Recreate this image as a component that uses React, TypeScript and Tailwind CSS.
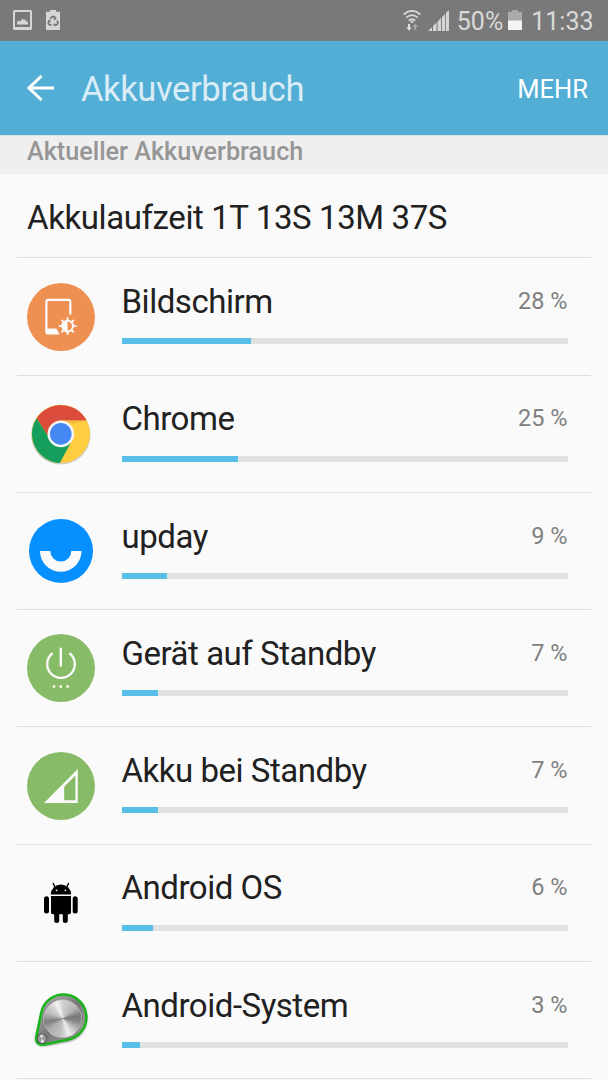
import type { ReactNode } from "react";

interface UsageEntry {
    name: string;
    percent: number;
    icon: ReactNode;
}

function ScreenIcon() {
    return (
        <svg viewBox="0 1.5 90 90" className="w-[90px] h-[90px]">
            <circle cx="45" cy="46.5" r="34" fill="#ee9052" />
            <path d="M54.3 44V31Q54.3 29.4 52.7 29.4H32Q30.4 29.4 30.4 31V61" fill="none" stroke="#fafafa" strokeWidth="2.2" />
            <path d="M29.3 58H40.5L43.5 64H31.5Q29.3 64 29.3 62Z" fill="#fafafa" />
            <g stroke="#fafafa" strokeWidth="1.9" strokeLinecap="round">
                <path d="M51.6 47.6V49.5M51.6 62V63.6M43.4 55.6H45.3M58 55.6H59.8M45.9 49.9L47.2 51.2M56 60L57.3 61.3M57.3 49.9L56 51.2M47.2 60L45.9 61.3" />
                <circle cx="51.6" cy="55.6" r="5.4" fill="none" />
            </g>
            <path d="M51.6 50.2A5.4 5.4 0 0 0 51.6 61Z" fill="#fafafa" />
        </svg>
    );
}

function ChromeIcon() {
    return (
        <svg viewBox="0 -1.3 90 90" className="w-[90px] h-[90px]">
            <circle cx="44.8" cy="44.6" r="29.7" fill="#000" opacity="0.18" />
            <circle cx="44.8" cy="43.6" r="29.2" fill="#ffcd40" />
            <path d="M20.6 27.9A29.2 29.2 0 0 1 70.7 30.2H44.8L31.5 45Z" fill="#db4c3c" />
            <path d="M20.6 27.9A29.2 29.2 0 0 0 43.8 72.8L54.5 53L44.8 43.6L31.5 45Z" fill="#169f5c" />
            <path d="M44.8 30.2H70.7L57 33.5Z" fill="#e9b33a" opacity="0.7" />
            <circle cx="44.8" cy="43.6" r="13.3" fill="#f6f6f6" />
            <circle cx="44.8" cy="43.6" r="10.8" fill="#4587f3" />
        </svg>
    );
}

function UpdayIcon() {
    return (
        <svg viewBox="0 0 90 90" className="w-[90px] h-[90px]">
            <circle cx="45" cy="45" r="32" fill="#0690ff" />
            <path d="M24 45H34.3A10.5 10.5 0 0 0 55.3 45H65.5A20.7 20.7 0 0 1 24 45Z" fill="#fafafa" />
        </svg>
    );
}

function PowerIcon() {
    return (
        <svg viewBox="0 -0.8 90 90" className="w-[90px] h-[90px]">
            <circle cx="45" cy="44.2" r="34" fill="#88bb68" />
            <path d="M36.5 29.5A13.8 13.8 0 1 0 53.5 29.5M44.8 24V42.8" fill="none" stroke="#fafafa" strokeWidth="2.4" />
            <path d="M36.8 62.7H39.2M43.6 62.7H46M50.4 62.7H52.8" stroke="#fafafa" strokeWidth="2.3" />
        </svg>
    );
}

function SignalIcon() {
    return (
        <svg viewBox="0 0.5 90 90" className="w-[90px] h-[90px]">
            <circle cx="45" cy="45.5" r="34" fill="#88bb68" />
            <path fillRule="evenodd" d="M28 62.5L61.8 28.5V62.5ZM48.2 46.2V59.7H59.4V35Z" fill="#fafafa" />
        </svg>
    );
}

function AndroidIcon() {
    return (
        <svg viewBox="0 -0.3 90 90" className="w-[90px] h-[90px]">
            <path d="M34.7 36.2A10.2 10 0 0 1 55.2 36.2Z" />
            <path d="M38.8 28.5L37.3 25.2M51 28.5L52.5 25.2" stroke="#000" strokeWidth="1.4" strokeLinecap="round" />
            <path d="M35 37.8H55V54.3Q55 56 53.3 56H51.8V62.3A2.3 2.3 0 0 1 46.8 62.3V56H43.2V62.3A2.3 2.3 0 0 1 38.2 62.3V56H36.7Q35 56 35 54.3Z" />
            <rect x="28" y="38" width="5" height="17.2" rx="2.5" />
            <rect x="56.7" y="38" width="5" height="17.2" rx="2.5" />
            <circle cx="40.6" cy="32" r="0.9" fill="#fafafa" />
            <circle cx="49.4" cy="32" r="0.9" fill="#fafafa" />
        </svg>
    );
}

function AndroidSystemIcon() {
    return (
        <svg viewBox="0 0 90 90" className="w-[90px] h-[90px]">
            <defs>
                <linearGradient id="plate" x1="0" y1="0" x2="1" y2="1">
                    <stop offset="0" stopColor="#c4c4c4" />
                    <stop offset="0.5" stopColor="#777" />
                    <stop offset="1" stopColor="#b5b5b5" />
                </linearGradient>
                <filter id="soft" x="-20%" y="-20%" width="140%" height="140%">
                    <feGaussianBlur stdDeviation="1.3" />
                </filter>
                <clipPath id="dial">
                    <circle cx="46.5" cy="43.7" r="19" />
                </clipPath>
            </defs>
            <path d="M25.3 37.5A23.2 23.2 0 1 1 52.5 66.5L29 71Q19 71.5 19.3 63Z" fill="#000" opacity="0.5" filter="url(#soft)" />
            <path d="M25.3 37.5A22.8 22.8 0 1 1 52.5 64.5L27.5 69.7Q19.6 70.3 20.2 62.5Z" fill="url(#plate)" stroke="#18b51a" strokeWidth="2.5" />
            <circle cx="46.5" cy="43.7" r="20" fill="#616161" />
            <g clipPath="url(#dial)">
                <foreignObject x="26" y="23" width="42" height="42">
                    <div className="w-[42px] h-[42px] bg-[conic-gradient(from_0deg_at_50%_49%,#d0d0d0,#b5b5b5_50deg,#777_80deg,#858585_100deg,#bbb_130deg,#eee_158deg,#c0c0c0_190deg,#b0b0b0_230deg,#7d7d7d_260deg,#999_272deg,#bbb_290deg,#d0d0d0_315deg,#f4f4f4_338deg,#d0d0d0)]" />
                </foreignObject>
            </g>
            <circle cx="46.5" cy="43.7" r="19.2" fill="none" stroke="#c0c0c0" strokeWidth="0.8" />
            <circle cx="26" cy="63.7" r="5.2" fill="#555" />
            <circle cx="26" cy="63.7" r="4.3" fill="#999" />
            <path d="M26 63.7L23.8 60.2L27 59.6ZM26 63.7L28.5 67L24.7 67.8Z" fill="#eee" />
        </svg>
    );
}

const entries: UsageEntry[] = [
    { name: "Bildschirm", percent: 28, icon: <ScreenIcon /> },
    { name: "Chrome", percent: 25, icon: <ChromeIcon /> },
    { name: "upday", percent: 9, icon: <UpdayIcon /> },
    { name: "Gerät auf Standby", percent: 7, icon: <PowerIcon /> },
    { name: "Akku bei Standby", percent: 7, icon: <SignalIcon /> },
    { name: "Android OS", percent: 6, icon: <AndroidIcon /> },
    { name: "Android-System", percent: 3, icon: <AndroidSystemIcon /> },
];

const fillWidth = (percent: number) => {
    const widths: Record<number, number> = { 28: 129.5, 25: 116, 9: 45, 7: 36, 6: 31.5, 3: 18 };
    return widths[percent] ?? percent * 4.5;
};

function StatusBar() {
    return (
        <div className="h-[40.5px] shrink-0 bg-[#797979] flex items-center justify-between pl-[13px] pr-[14.5px] text-[25px] leading-none text-[#d9d9d9]">
            <div className="flex items-center gap-[14px]">
                <svg viewBox="0 0 19 20" className="w-[19px] h-5">
                    <path fillRule="evenodd" d="M1.5 0H17.5Q19 0 19 1.5V18.5Q19 20 17.5 20H1.5Q0 20 0 18.5V1.5Q0 0 1.5 0ZM2 2V17H17V2Z" fill="#d6d6d6" />
                    <path d="M4 14.5V12L6 10.5L7.5 11.5L9.5 8.5L11 10L12 9.3L13.5 11.5L15 12V14.5Z" fill="#d6d6d6" />
                </svg>
                <svg viewBox="0 0 14 20" className="w-3.5 h-5">
                    <path d="M0 1.8H4V0H10V1.8H14V20H0Z" fill="#d6d6d6" />
                    <g fill="none" stroke="#777" strokeWidth="1.7">
                        <path d="M4.2 9L6 6.6H8L9.3 8.8M11 10.7L12 13L10.7 14.8H8M5.7 14.8H3.4L2.2 12.9L3.5 10.5" />
                        <path d="M9.7 6.8V9.3H7.5M9 13.2L7.5 14.8L9 16.3M2 10.7L3.8 10.2L4.5 12" strokeWidth="1" />
                    </g>
                </svg>
            </div>
            <div className="flex items-center">
                <svg viewBox="0 0 18 21" className="w-[18px] h-[21px]">
                    <g fill="none" stroke="#d9d9d9" strokeWidth="1.8">
                        <path d="M0.6 4.5Q9 -2.7 17.4 4.5M3.2 7.7Q9 2.5 14.8 7.7M5.8 10.7Q9 7.8 12.2 10.7" />
                    </g>
                    <path d="M7.2 11.5Q9 10.2 10.8 11.5L9 13.5Z" fill="#d9d9d9" />
                    <path d="M5 14H7V17.5H8.7L6 20.7L3.3 17.5H5Z" fill="#e0e0e0" />
                    <path d="M11.2 20V16.7H9.5L12.2 13.5L14.9 16.7H13.2V20Z" fill="#a8a8a8" />
                </svg>
                <svg viewBox="0 0 21 21" className="w-[21px] h-[21px] ml-[7px]">
                    <path d="M0 21L4 17.2V21ZM5 21V16L8.6 12.5V21ZM9.6 21V11.5L13 8V21ZM13.9 21V7.2L17.1 4V21ZM17.9 21V3L21 0V21Z" fill="#d4d4d4" />
                </svg>
                <span className="ml-2 relative top-px">50%</span>
                <svg viewBox="0 0 14 20" className="w-3.5 h-5 ml-[5px]">
                    <path d="M0 1.8H4V0H10V1.8H14V20H0Z" fill="#aaa" />
                    <path d="M0 10.5H14V20H0Z" fill="#f4f4f4" />
                </svg>
                <span className="ml-[9px] relative top-px">11:33</span>
            </div>
        </div>
    );
}

function UsageRow({ entry }: { entry: UsageEntry }) {
    return (
        <div className="h-[117.25px] shrink-0 mx-[17px] border-t border-[#dedede] flex">
            <div className="w-[87.5px] h-[116.5px] shrink-0 flex items-center justify-center">
                <div className="shrink-0">{entry.icon}</div>
            </div>
            <div className="ml-[17px] w-[446px] pt-[23.8px]">
                <div className="flex justify-between">
                    <span className="text-[33px] leading-[39px] tracking-[-0.47px] text-[#212121]">{entry.name}</span>
                    <span className="text-[23.5px] leading-[39px] text-[#808080]">{entry.percent} %</span>
                </div>
                <div className="h-1.5 mt-[17.2px] bg-[#e1e1e1]">
                    <div className="h-full bg-[#57bfe6]" style={{ width: fillWidth(entry.percent) }} />
                </div>
            </div>
        </div>
    );
}

function App() {
    return (
        <div className="w-[608px] h-[1080px] overflow-hidden flex flex-col bg-[#fafafa] font-['Roboto',sans-serif]">
            <StatusBar />
            <header className="h-[94.5px] shrink-0 bg-[#52aed5] flex items-center pl-[27px] pr-5">
                <svg viewBox="0 0 27 26" className="w-[27px] h-[26px]">
                    <path d="M14.5 1L2 13L14.5 25M2 13H27" fill="none" stroke="#fff" strokeWidth="3" />
                </svg>
                <h1 className="ml-[27px] pt-[3px] text-[34.5px] leading-10 tracking-[-0.4px] text-[#d9edf6]">Akkuverbrauch</h1>
                <button className="ml-auto pt-0.5 text-[25.5px] text-white">MEHR</button>
            </header>
            <div className="h-[39px] shrink-0 bg-[#efefef] border-t border-[#dadfe1] pl-[27px] text-[25.2px] leading-[32px] font-medium text-[#969696]">
                Aktueller Akkuverbrauch
            </div>
            <div className="h-[83.4px] shrink-0 pl-[27px] flex items-center text-[33px] leading-[38px] tracking-[-0.4px] text-[#212121]">
                <span className="pt-[5px]">Akkulaufzeit 1T 13S 13M 37S</span>
            </div>
            {entries.map((entry) => (
                <UsageRow key={entry.name} entry={entry} />
            ))}
            <div className="mx-[17px] h-px shrink-0 bg-[#dedede]" />
        </div>
    );
}

export default App;
